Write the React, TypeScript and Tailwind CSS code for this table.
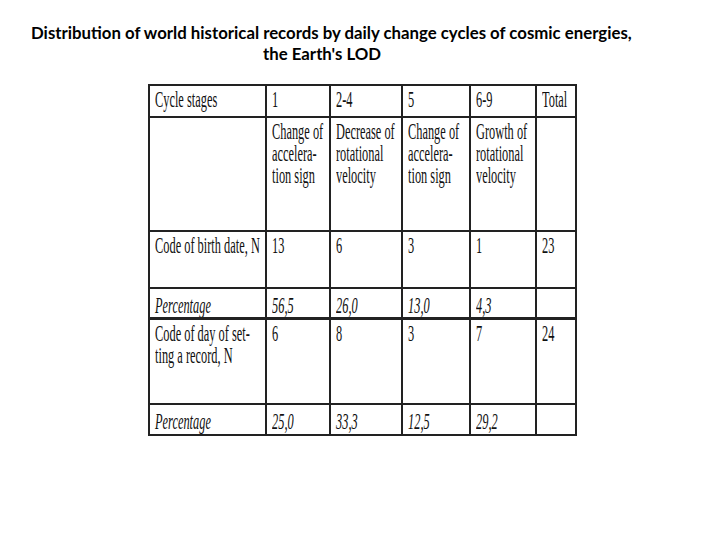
import type { ReactNode } from 'react'

type Cell = { lines: string[]; italic?: boolean }

const widths = [117, 64, 72, 68, 66, 40]

const rows: { h: string; thick?: boolean; cells: Cell[] }[] = [
  {
    h: 'h-[32px]',
    cells: [
      { lines: ['Cycle stages'] },
      { lines: ['1'] },
      { lines: ['2-4'] },
      { lines: ['5'] },
      { lines: ['6-9'] },
      { lines: ['Total'] },
    ],
  },
  {
    h: 'h-[114px]',
    cells: [
      { lines: [] },
      { lines: ['Change of', 'accelera-', 'tion sign'] },
      { lines: ['Decrease of', 'rotational', 'velocity'] },
      { lines: ['Change of', 'accelera-', 'tion sign'] },
      { lines: ['Growth of', 'rotational', 'velocity'] },
      { lines: [] },
    ],
  },
  {
    h: 'h-[57px]',
    cells: [
      { lines: ['Code of birth date, N'] },
      { lines: ['13'] },
      { lines: ['6'] },
      { lines: ['3'] },
      { lines: ['1'] },
      { lines: ['23'] },
    ],
  },
  {
    h: 'h-[30px]',
    cells: [
      { lines: ['Percentage'], italic: true },
      { lines: ['56,5'], italic: true },
      { lines: ['26,0'], italic: true },
      { lines: ['13,0'], italic: true },
      { lines: ['4,3'], italic: true },
      { lines: [] },
    ],
  },
  {
    h: 'h-[85px]',
    thick: true,
    cells: [
      { lines: ['Code of day of set-', 'ting a record, N'] },
      { lines: ['6'] },
      { lines: ['8'] },
      { lines: ['3'] },
      { lines: ['7'] },
      { lines: ['24'] },
    ],
  },
  {
    h: 'h-[31px]',
    cells: [
      { lines: ['Percentage'], italic: true },
      { lines: ['25,0'], italic: true },
      { lines: ['33,3'], italic: true },
      { lines: ['12,5'], italic: true },
      { lines: ['29,2'], italic: true },
      { lines: [] },
    ],
  },
]

// texto serifado estreito: a tabela original vem com fonte bem condensada
function Condensed({ cell }: { cell: Cell }): ReactNode {
  return (
    <div className="w-0">
      <div
        className={`origin-top-left scale-x-[0.55] whitespace-nowrap text-[22.5px] leading-[22px] text-[#111] ${
          cell.italic ? 'italic' : ''
        }`}
      >
        {cell.lines.map((l, i) => (
          <div key={i}>{l}</div>
        ))}
      </div>
    </div>
  )
}

export default function App() {
  return (
    <div className="w-[720px] h-[540px] bg-white overflow-hidden">
      {/* Titulo */}
      <div className="pt-[22px] font-['Lato',sans-serif] font-bold text-[16.8px] leading-[21px] text-black">
        <div className="pl-[31px] whitespace-nowrap">
          Distribution of world historical records by daily change cycles of cosmic energies,
        </div>
        <div className="pl-[263px]">the Earth's LOD</div>
      </div>

      {/* Tabela */}
      <div className="pl-[148px] pt-[20px]">
        <table className="w-[427px] table-fixed border-collapse border-2 border-[#222] font-['Liberation_Serif','Times_New_Roman',serif]">
          <colgroup>
            {widths.map((w, i) => (
              <col key={i} style={{ width: w }} />
            ))}
          </colgroup>
          <tbody>
            {rows.map((r, ri) => (
              <tr key={ri} className={r.h}>
                {r.cells.map((c, ci) => (
                  <td
                    key={ci}
                    className={`align-top border-2 border-[#222] pl-[5px] overflow-hidden ${
                      r.thick ? 'border-t-[3px]' : ''
                    } ${c.italic ? 'pt-[6px]' : 'pt-[3px]'}`}
                  >
                    <Condensed cell={c} />
                  </td>
                ))}
              </tr>
            ))}
          </tbody>
        </table>
      </div>
    </div>
  )
}
